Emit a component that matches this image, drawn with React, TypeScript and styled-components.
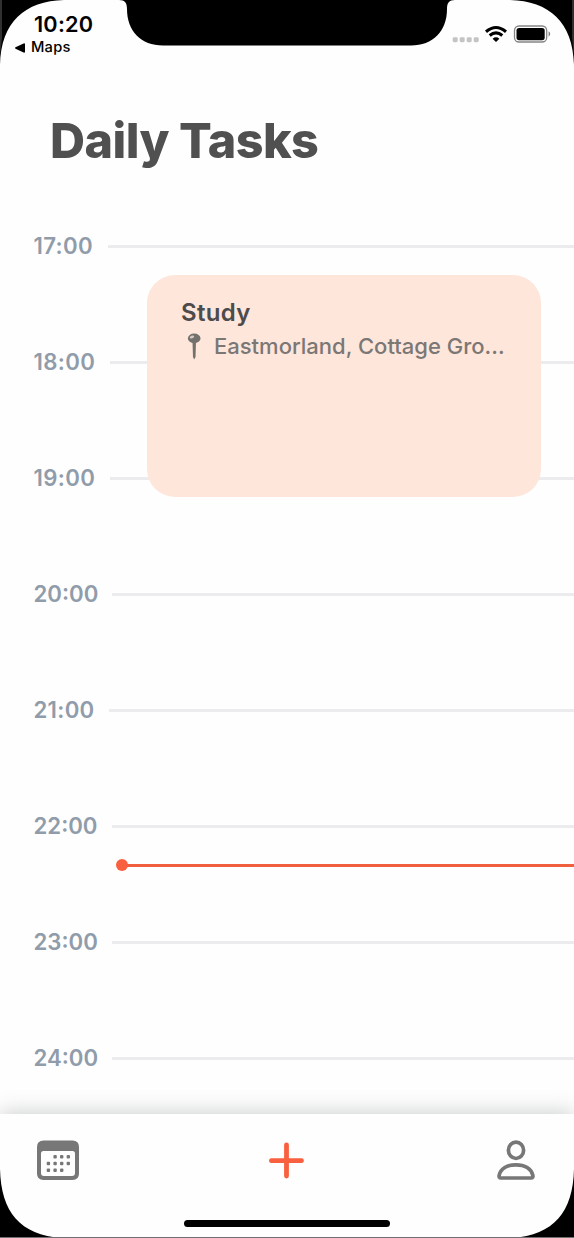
import React from "react";
import styled, { createGlobalStyle } from "styled-components";

const GlobalStyle = createGlobalStyle`
  *, *::before, *::after { box-sizing: border-box; }
  body { margin: 0; background: #fff; }
`;

const Screen = styled.div`
  position: relative;
  display: flex;
  flex-direction: column;
  width: 574px;
  height: 1238px;
  overflow: hidden;
  background: #fefefe;
  font-family: Inter, "Liberation Sans", sans-serif;
`;

const Bezel = styled.svg`
  position: absolute;
  inset: 0;
  z-index: 5;
  pointer-events: none;
`;

const StatusBar = styled.header`
  display: flex;
  justify-content: space-between;
  height: 72px;
  padding: 11px 24px 0 15px;
  color: #000;
`;

const ClockGroup = styled.div`
  display: flex;
  flex-direction: column;
`;

const Clock = styled.span`
  padding-left: 19px;
  font-size: 21.7px;
  font-weight: 600;
  line-height: 27px;
  letter-spacing: 0.2px;
`;

const BackLink = styled.span`
  display: flex;
  align-items: center;
  gap: 6px;
  font-size: 14.7px;
  font-weight: 500;
  line-height: 19px;
  letter-spacing: 0.2px;
`;

const Indicators = styled.svg`
  display: block;
  margin-top: 12px;
`;

const Title = styled.h1`
  margin: 0;
  padding: 39px 0 0 50px;
  height: 116px;
  color: #505050;
  font-size: 48.5px;
  font-weight: 800;
  line-height: 60px;
  letter-spacing: -0.55px;
  white-space: nowrap;
`;

const Timeline = styled.main`
  position: relative;
  flex: 1;
  min-height: 0;
  overflow: hidden;
`;

const Hour = styled.div`
  display: flex;
  align-items: center;
  height: 116px;
  padding-left: 33.5px;
`;

const HourLabel = styled.time<{ $width: number; $tracking: number }>`
  width: ${(p) => p.$width}px;
  flex: none;
  color: #909caa;
  font-size: 22.2px;
  font-weight: 600;
  line-height: 28px;
  letter-spacing: ${(p) => p.$tracking}px;
  white-space: nowrap;
`;

const HourLine = styled.div`
  flex: 1;
  height: 3px;
  background: #ececee;
`;

const EventCard = styled.article`
  position: absolute;
  top: 87px;
  left: 147px;
  width: 394px;
  height: 222px;
  padding: 22px 34px;
  border-radius: 28px;
  background: #fee6db;
`;

const EventTitle = styled.h2`
  margin: 0;
  color: #4d4b4b;
  font-size: 24px;
  font-weight: 600;
  line-height: 32px;
  letter-spacing: 0.3px;
`;

const EventPlace = styled.div`
  display: flex;
  align-items: center;
  height: 34px;
  padding-left: 6px;
  gap: 12px;
  color: #7b7775;
  font-size: 22px;
  font-weight: 500;
  white-space: nowrap;
`;

const NowMarker = styled.div`
  position: absolute;
  top: 671px;
  left: 116px;
  right: 0;
  display: flex;
  align-items: center;
`;

const NowDot = styled.span`
  width: 12px;
  height: 12px;
  border-radius: 50%;
  background: #f9603f;
`;

const NowLine = styled.span`
  flex: 1;
  height: 3px;
  margin-left: -1px;
  background: #f0603f;
`;

const TabBar = styled.nav`
  position: relative;
  display: flex;
  justify-content: space-between;
  align-items: flex-start;
  height: 124px;
  padding: 26px 39px 0 37px;
  background: #fefefe;
  box-shadow: 0 -1px 20px rgba(60, 65, 65, 0.27);
`;

const HomeIndicator = styled.div`
  position: absolute;
  left: 184px;
  bottom: 11px;
  width: 206px;
  height: 7px;
  border-radius: 4px;
  background: #000;
`;

const HOURS = [
  { label: "17:00", width: 74.5, tracking: 0.35 },
  { label: "18:00", width: 76.5, tracking: 0.35 },
  { label: "19:00", width: 76.5, tracking: 0.35 },
  { label: "20:00", width: 78.5, tracking: 0 },
  { label: "21:00", width: 75.5, tracking: 0.3 },
  { label: "22:00", width: 78.5, tracking: 0 },
  { label: "23:00", width: 78.5, tracking: 0 },
  { label: "24:00", width: 78.5, tracking: 0 },
];

const CALENDAR_DOTS = [
  [18, 16], [24.6, 16], [31.2, 16],
  [11.3, 22.7], [18, 22.7], [24.6, 22.7], [31.2, 22.7],
  [11.3, 29.4], [18, 29.4], [24.6, 29.4],
];

function DeviceBezel() {
  return (
    <Bezel width="574" height="1238" viewBox="0 0 574 1238">
      <path d="M0 0H64C25 1 1 22 0 65Z" />
      <path d="M574 0H510C549 1 573 22 574 65Z" />
      <path d="M119 0C125 0 127 3 127 9C127 31 141 45.500 163 45.500H411C433 45.500 447 31 447 9C447 3 449 0 455 0Z" />
      <path d="M0 1169C1 1212 20 1235 62 1238H0Z" />
      <path d="M574 1169C573 1212 554 1235 512 1238H574Z" />
      <path d="M0 0H2V38L0 55ZM572 0H574V55L572 38Z" fill="#303030" />
      <path d="M0 1237.500H574" stroke="#707070" />
    </Bezel>
  );
}

function StatusIcons() {
  return (
    <Indicators width="98" height="24" viewBox="0 0 98 24" overflow="visible">
      <g fill="#c4c4c4">
        {[0, 7, 14, 21].map((x) => (
          <rect key={x} x={x + 0.7} y="14.200" width="5" height="5" rx="1.400" />
        ))}
      </g>
      <g fill="none" stroke="#000" strokeWidth="3.100">
        <path d="M34 8.700Q44 0.300 54 8.700" />
        <path d="M37.700 12.500Q44 7.200 50.300 12.500" />
      </g>
      <path d="M40.600 15.700Q44 13 47.400 15.700L44 19Z" />
      <rect x="62.500" y="3" width="32.200" height="16" rx="4.500" fill="none" stroke="#858585" strokeWidth="1.300" />
      <rect x="64.500" y="5" width="28.200" height="12.200" rx="2.600" />
      <path d="M96.600 8.300Q99.800 11 96.600 13.700Z" fill="#777" />
    </Indicators>
  );
}

function CalendarIcon() {
  return (
    <svg width="42" height="40" viewBox="0 0 42 40" fill="#777">
      <path fillRule="evenodd" d="M6.500 .5H35.500Q42 .5 42 7V33.500Q42 40 35.500 40H6.500Q0 40 0 33.500V7Q0 .5 6.500 .5ZM6.500 11Q4 11 4 13.500V33Q4 36 7 36H35Q38 36 38 33V13.500Q38 11 35.500 11Z" />
      {CALENDAR_DOTS.map(([x, y]) => (
        <rect key={`${x}-${y}`} x={x - 1.6} y={y - 0.9} width="3.400" height="3.400" rx="1" />
      ))}
    </svg>
  );
}

function PlusIcon() {
  return (
    <svg width="40" height="40" viewBox="0 0 40 40" stroke="#f9603f" strokeWidth="4.800" strokeLinecap="round">
      <path d="M3.400 20.700H33.500M18.500 5V36" />
    </svg>
  );
}

function PersonIcon() {
  return (
    <svg width="38" height="40" viewBox="0 0 38 40" fill="none" stroke="#777" strokeWidth="3.700">
      <ellipse cx="19" cy="10.300" rx="7.600" ry="8.200" />
      <path d="M4 38H34Q36.500 38 35.800 35.200C34.300 28.800 28 24.800 19 24.800S3.700 28.800 2.200 35.200Q1.500 38 4 38Z" />
    </svg>
  );
}

function PinIcon() {
  return (
    <svg width="15" height="27" viewBox="0 0 15 27">
      <path d="M5.500 9H9L8.500 24L7.200 26.500L6 24Z" fill="#73716e" />
      <ellipse cx="7.200" cy="5.400" rx="6.300" ry="4.800" fill="#73716e" />
      <ellipse cx="5" cy="4" rx="2.300" ry="1.300" fill="#d5c9c2" transform="rotate(-18 5 4)" />
    </svg>
  );
}

export default function App() {
  return (
    <Screen>
      <GlobalStyle />
      <StatusBar>
        <ClockGroup>
          <Clock>10:20</Clock>
          <BackLink>
            <svg width="10" height="10" viewBox="0 0 10 10">
              <path d="M.5 4.300L8.600.4Q10 0 10 1.300V8.700Q10 10 8.600 9.600L.5 5.700Q-.4 5 .5 4.300Z" />
            </svg>
            Maps
          </BackLink>
        </ClockGroup>
        <StatusIcons />
      </StatusBar>
      <Title>Daily Tasks</Title>
      <Timeline>
        {HOURS.map((hour) => (
          <Hour key={hour.label}>
            <HourLabel $width={hour.width} $tracking={hour.tracking}>
              {hour.label}
            </HourLabel>
            <HourLine />
          </Hour>
        ))}
        <EventCard>
          <EventTitle>Study</EventTitle>
          <EventPlace>
            <PinIcon />
            Eastmorland, Cottage Gro...
          </EventPlace>
        </EventCard>
        <NowMarker>
          <NowDot />
          <NowLine />
        </NowMarker>
      </Timeline>
      <TabBar>
        <CalendarIcon />
        <PlusIcon />
        <PersonIcon />
        <HomeIndicator />
      </TabBar>
      <DeviceBezel />
    </Screen>
  );
}
